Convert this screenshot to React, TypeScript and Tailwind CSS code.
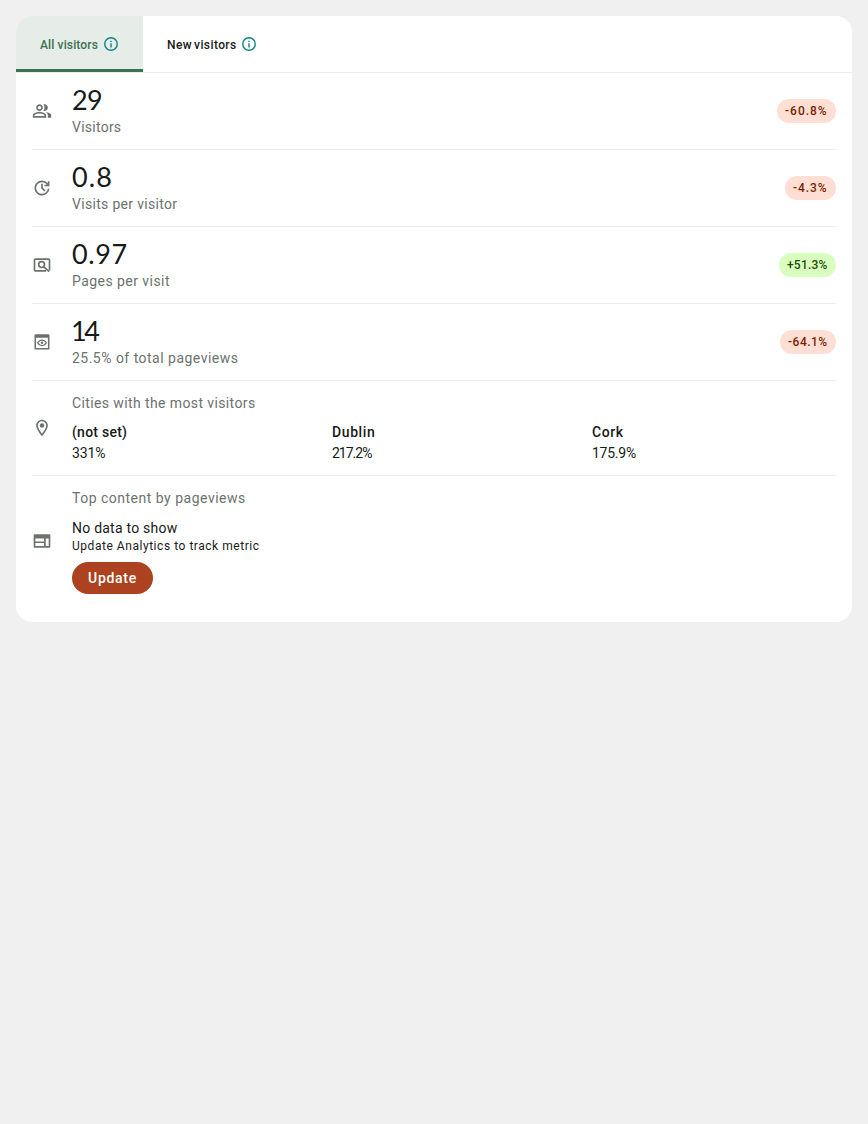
import React from 'react';

const PeopleIcon = () => (
  <svg viewBox="0 0 24 24" width="20" height="20" fill="currentColor">
    <path d="M1 20v-2.8q0-.85.438-1.562T2.6 14.55a14.8 14.8 0 0 1 3.15-1.163A13.8 13.8 0 0 1 9 13q1.65 0 3.25.387t3.15 1.163q.724.375 1.162 1.087Q17 16.35 17 17.2V20zm18 0v-3q0-1.1-.613-2.113T16.65 13.15q1.275.15 2.4.512t2.1.888q.9.5 1.375 1.112T23 17v3zM9 12q-1.65 0-2.825-1.175T5 8t1.175-2.825T9 4t2.825 1.175T13 8t-1.175 2.825T9 12m10-4q0 1.65-1.175 2.825T15 12q-.275 0-.7-.062a6 6 0 0 1-.7-.138 6 6 0 0 0 1.037-1.775Q15 9.05 15 8t-.362-2.025A6 6 0 0 0 13.6 4.2q.35-.125.7-.163T15 4q1.65 0 2.825 1.175T19 8M3 18h12v-.8q0-.275-.137-.5a.95.95 0 0 0-.363-.35q-1.35-.675-2.725-1.012A11.6 11.6 0 0 0 9 15q-1.4 0-2.775.338T3.5 16.35a.95.95 0 0 0-.363.35.96.96 0 0 0-.137.5zm6-8q.825 0 1.413-.588T11 8t-.587-1.412T9 6t-1.412.588T7 8t.588 1.412T9 10" />
  </svg>
);

const UpdateIcon = () => (
  <svg viewBox="0 0 24 24" width="20" height="20" fill="currentColor">
    <path d="M12 21q-1.875 0-3.512-.712t-2.85-1.925-1.925-2.85T3 12t.713-3.512 1.924-2.85 2.85-1.925T12 3q2.05 0 3.888.875T19 6.35V4h2v6h-6V8h2.75q-1.025-1.4-2.525-2.2T12 5Q9.075 5 7.038 7.038T5 12t2.038 4.963T12 19q2.625 0 4.588-1.7T18.9 13h2.05q-.375 3.425-2.937 5.713T12 21m2.8-4.8L11 12.4V7h2v4.6l3.2 3.2z" />
  </svg>
);

const PageSearchIcon = () => (
  <svg viewBox="0 0 24 24" width="20" height="20" fill="none" stroke="currentColor" strokeWidth="2">
    <path d="M17 19H4a1 1 0 0 1-1-1V6a1 1 0 0 1 1-1h16a1 1 0 0 1 1 1v12.6" />
    <circle cx="11.5" cy="11.5" r="3.5" />
    <path d="M14 14l6.6 6" />
  </svg>
);

const PreviewIcon = () => (
  <svg viewBox="0 0 24 24" width="20" height="20" fill="currentColor">
    <path
      fillRule="evenodd"
      d="M4 2.800h16a1 1 0 0 1 1 1v16.200a1 1 0 0 1-1 1H4a1 1 0 0 1-1-1V3.800a1 1 0 0 1 1-1zM4.900 7v12.100h14.200V7z"
    />
    <path
      fillRule="evenodd"
      d="M12 9c2.730 0 5.060 1.660 6 4-.940 2.340-3.270 4-6 4s-5.060-1.660-6-4c.940-2.340 3.270-4 6-4zm0 1.500c-1.880 0-3.420.960-4.300 2.500.880 1.540 2.420 2.500 4.300 2.500s3.420-.960 4.300-2.500c-.880-1.540-2.420-2.500-4.300-2.500z"
    />
    <circle cx="12" cy="13" r="1.500" />
  </svg>
);

const WebIcon = () => (
  <svg viewBox="0 0 24 24" width="20" height="20" fill="currentColor">
    <path
      fillRule="evenodd"
      d="M3.200 4h17.600a1.200 1.200 0 0 1 1.200 1.200v13.600a1.200 1.200 0 0 1-1.200 1.200H3.200A1.200 1.200 0 0 1 2 18.800V5.200A1.200 1.200 0 0 1 3.200 4zM4 9v3.500h10.500V9zM4 14.500V18h10.500v-3.500zM16.500 9v9H20V9z"
    />
  </svg>
);

const PinIcon = () => (
  <svg viewBox="0 0 24 24" width="20" height="20" fill="currentColor">
    <path
      fillRule="evenodd"
      d="M12 2C8.13 2 5 5.13 5 9c0 5.25 7 13 7 13s7-7.75 7-13c0-3.870-3.130-7-7-7zM7 9c0-2.760 2.240-5 5-5s5 2.240 5 5c0 2.880-2.880 7.190-5 9.880C9.920 16.210 7 11.850 7 9z"
    />
    <circle cx="12" cy="9" r="2.700" />
  </svg>
);

const InfoIcon = () => (
  <svg viewBox="0 0 14 14" width="14" height="14" className="shrink-0 text-[#108080]">
    <circle cx="7" cy="7" r="6.250" fill="none" stroke="currentColor" strokeWidth="1.400" />
    <path fill="currentColor" d="M6.300 6.300h1.400v4.200H6.300zM6.300 3.700h1.400v1.400H6.300z" />
  </svg>
);

const metrics = [
  { icon: <PeopleIcon />, value: '29', label: 'Visitors', change: '-60.8%', up: false, valueSpacing: 'tracking-[-0.6px]', labelSpacing: 'tracking-[0.25px]', pill: 'w-[59px] tracking-[1px]' },
  { icon: <UpdateIcon />, value: '0.8', label: 'Visits per visitor', change: '-4.3%', up: false, valueSpacing: 'tracking-[1.1px]', labelSpacing: 'tracking-[0.31px]', pill: 'w-[51px] tracking-[0.95px]' },
  { icon: <PageSearchIcon />, value: '0.97', label: 'Pages per visit', change: '+51.3%', up: true, valueSpacing: 'tracking-[0.6px]', labelSpacing: 'tracking-[0.45px]', pill: 'w-[57px] tracking-[0.2px]' },
  { icon: <PreviewIcon />, value: '14', label: '25.5% of total pageviews', change: '-64.1%', up: false, valueSpacing: '-ml-px tracking-[-2.5px]', labelSpacing: 'tracking-[0.48px]', pill: 'w-[56px] tracking-[0.5px]' },
];

const cities = [
  { name: '(not set)', share: '331%', nameSpacing: 'tracking-[0.25px]', shareSpacing: 'tracking-[-0.1px]' },
  { name: 'Dublin', share: '217.2%', nameSpacing: 'tracking-[0.6px]', shareSpacing: 'tracking-[-1px]' },
  { name: 'Cork', share: '175.9%', nameSpacing: 'tracking-[0.6px]', shareSpacing: 'tracking-[-0.25px]' },
];

export default function App() {
  return (
    <div className="min-h-[1124px] bg-[#f0f0f0] p-4 font-['Roboto','Noto_Sans',sans-serif] text-[#161b18]">
      <section className="h-[606px] overflow-hidden rounded-2xl bg-white">
        <div className="flex h-[57px] border-b border-[#ebeef0] text-xs font-medium">
          <button className="flex h-14 w-[127px] items-center gap-1.5 border-b-3 border-[#3c7251] bg-[#e6ede8] pt-[3px] pl-6 text-[#3c7251]">
            <span className="w-[58px] pt-0.5 text-left tracking-[0.13px] whitespace-nowrap">All visitors</span>
            <InfoIcon />
          </button>
          <button className="flex h-14 items-center gap-1.5 px-6">
            <span className="w-[69px] pt-0.5 text-left tracking-[0.4px] [word-spacing:-1.4px] whitespace-nowrap">New visitors</span>
            <InfoIcon />
          </button>
        </div>
        <div className="px-4">
          {metrics.map((m) => (
            <div key={m.label} className="flex h-[77px] items-center border-b border-[#ebeef0]">
              <div className="w-10 shrink-0 text-[#6c726e]">{m.icon}</div>
              <div className="flex-1 pb-0.5">
                <div className={`font-['Lato','Roboto',sans-serif] text-[27px] leading-[34px] ${m.valueSpacing}`}>{m.value}</div>
                <div className={`text-sm leading-5 text-[#6c726e] ${m.labelSpacing}`}>{m.label}</div>
              </div>
              <div
                className={`flex h-6 items-center rounded-full pl-2 text-xs font-medium ${m.pill} ${
                  m.up ? 'bg-[#d8ffc0] text-[#1f4c04]' : 'bg-[#ffded3] text-[#7a1e00]'
                }`}
              >
                {m.change}
              </div>
            </div>
          ))}
          <div className="flex h-[95px] items-center border-b border-[#ebeef0]">
            <div className="w-10 shrink-0 text-[#6c726e]"><PinIcon /></div>
            <div className="min-w-0 flex-1 pt-px">
              <div className="text-sm leading-5 tracking-[0.39px] text-[#6c726e]">Cities with the most visitors</div>
              <div className="mt-[9px] flex">
                {cities.map((c) => (
                  <div key={c.name} className="w-[260px] shrink-0 text-sm leading-[21px] last:w-auto">
                    <div className={`font-medium ${c.nameSpacing}`}>{c.name}</div>
                    <div className={c.shareSpacing}>{c.share}</div>
                  </div>
                ))}
              </div>
            </div>
          </div>
          <div className="flex h-[130px] items-center">
            <div className="w-10 shrink-0 text-[#6c726e]"><WebIcon /></div>
            <div className="flex-1">
              <div className="text-sm leading-5 tracking-[0.5px] text-[#6c726e]">Top content by pageviews</div>
              <div className="mt-2.5 text-sm leading-5 tracking-[0.23px]">No data to show</div>
              <div className="text-xs leading-4 tracking-[0.54px]">Update Analytics to track metric</div>
              <button className="mt-2 h-8 w-[81px] rounded-full bg-[#ac4220] text-sm font-medium tracking-[0.7px] text-white">Update</button>
            </div>
          </div>
        </div>
      </section>
    </div>
  );
}
